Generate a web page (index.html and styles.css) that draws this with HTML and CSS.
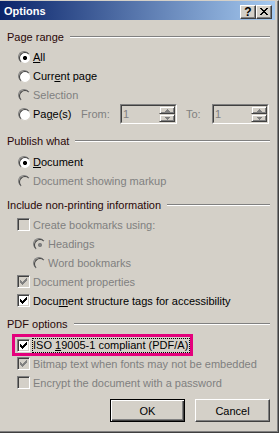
FILE: index.html
```html
<!DOCTYPE html>
<html>
<head>
<meta charset="utf-8">
<title>Options</title>
<link rel="stylesheet" href="styles.css">
</head>
<body>
<div class="window">
  <div class="titlebar">
    <span class="title">Options</span>
    <span class="caps">
      <span class="cap-btn help">?</span>
      <span class="cap-btn"><svg width="14" height="12" viewBox="0 0 14 12"><path d="M3 2h2v1h-2z M9 2h2v1h-2z M4 3h2v1h-2z M8 3h2v1h-2z M5 4h4v1h-4z M6 5h2v1h-2z M5 6h4v1h-4z M4 7h2v1h-2z M8 7h2v1h-2z M3 8h2v1h-2z M9 8h2v1h-2z" fill="#000"/></svg></span>
    </span>
  </div>
  <div class="content">
    <div class="head g1"><span>Page range</span><i class="etch"></i></div>
    <div class="row r-first"><span class="radio on"></span><span><u>A</u>ll</span></div>
    <div class="row"><span class="radio"></span><span>Curr<u>e</u>nt page</span></div>
    <div class="row dis"><span class="radio"></span><span>Selection</span></div>
    <div class="row pages">
      <span class="radio"></span><span class="lbl-pages">Pa<u>g</u>e(s)</span>
      <span class="lbl-from dis-t">From:</span>
      <span class="spin"><span class="spin-in"><span class="spin-val">1</span><span class="spin-btns"><span class="sb"><svg width="5" height="3" viewBox="0 0 5 3"><path d="M2 0h1v1h1v1h1v1h-5v-1h1v-1h1z" fill="#808080"/></svg></span><span class="sb"><svg width="5" height="3" viewBox="0 0 5 3"><path d="M0 0h5v1h-1v1h-1v1h-1v-1h-1v-1h-1z" fill="#808080"/></svg></span></span></span></span>
      <span class="lbl-to dis-t">To:</span>
      <span class="spin"><span class="spin-in"><span class="spin-val">1</span><span class="spin-btns"><span class="sb"><svg width="5" height="3" viewBox="0 0 5 3"><path d="M2 0h1v1h1v1h1v1h-5v-1h1v-1h1z" fill="#808080"/></svg></span><span class="sb"><svg width="5" height="3" viewBox="0 0 5 3"><path d="M0 0h5v1h-1v1h-1v1h-1v-1h-1v-1h-1z" fill="#808080"/></svg></span></span></span></span>
    </div>

    <div class="head g2"><span>Publish what</span><i class="etch"></i></div>
    <div class="row r-first2"><span class="radio on"></span><span><u>D</u>ocument</span></div>
    <div class="row dis"><span class="radio"></span><span>Document showing markup</span></div>

    <div class="head g3"><span>Include non-printing information</span><i class="etch"></i></div>
    <div class="row crow r-first dis"><span class="check"></span><span>Create bookmarks using:</span></div>
    <div class="row sub dis"><span class="radio on"></span><span>Headings</span></div>
    <div class="row sub dis"><span class="radio"></span><span>Word bookmarks</span></div>
    <div class="row crow dis"><span class="check on"><svg width="13" height="13" viewBox="0 0 13 13"><path d="M3 5h1v3h-1z M4 6h1v3h-1z M5 7h1v3h-1z M6 6h1v3h-1z M7 5h1v3h-1z M8 4h1v3h-1z M9 3h1v3h-1z"/></svg></span><span>Document properties</span></div>
    <div class="row crow"><span class="check on"><svg width="13" height="13" viewBox="0 0 13 13"><path d="M3 5h1v3h-1z M4 6h1v3h-1z M5 7h1v3h-1z M6 6h1v3h-1z M7 5h1v3h-1z M8 4h1v3h-1z M9 3h1v3h-1z"/></svg></span><span>Docu<u>m</u>ent structure tags for accessibility</span></div>

    <div class="head g4"><span>PDF options</span><i class="etch"></i></div>
    <div class="hl"><span class="check on"><svg width="13" height="13" viewBox="0 0 13 13"><path d="M3 5h1v3h-1z M4 6h1v3h-1z M5 7h1v3h-1z M6 6h1v3h-1z M7 5h1v3h-1z M8 4h1v3h-1z M9 3h1v3h-1z"/></svg></span><span class="focus">ISO <u>1</u>9005-1 compliant (PDF/A)</span></div>
    <div class="row crow dis after-hl"><span class="check on"><svg width="13" height="13" viewBox="0 0 13 13"><path d="M3 5h1v3h-1z M4 6h1v3h-1z M5 7h1v3h-1z M6 6h1v3h-1z M7 5h1v3h-1z M8 4h1v3h-1z M9 3h1v3h-1z"/></svg></span><span>Bitmap text when fonts may not be embedded</span></div>
    <div class="row crow dis"><span class="check"></span><span>Encrypt the document with a password</span></div>

    <div class="buttons">
      <span class="btn default">OK</span>
      <span class="btn">Cancel</span>
    </div>
  </div>
</div>
</body>
</html>
```
FILE: styles.css
```css
* { box-sizing: border-box; }
body {
  margin: 0;
  font: 11px "Liberation Sans", Arial, sans-serif;
  color: #000;
}
u { text-decoration: underline; text-underline-offset: 1px; }

.window {
  width: 279px;
  height: 433px;
  background: #d4d0c8;
  border-top: 1px solid #d4d0c8;
  border-right: 1px solid #404040;
  border-bottom: 1px solid #404040;
  box-shadow: inset -1px -1px #808080;
  display: flex;
  flex-direction: column;
}

.titlebar {
  height: 19px;
  margin-right: 3px;
  background: linear-gradient(to right, #0a246a, #a6caf0);
  display: flex;
  align-items: center;
  justify-content: space-between;
  padding: 0 3px 0 4px;
}
.title {
  color: #fff;
  font-weight: bold;
  font-size: 11px;
  margin-top: 1px;
}
.caps { display: flex; margin-top: 2px; }
.cap-btn {
  width: 16px;
  height: 14px;
  background: #d4d0c8;
  border: 1px solid;
  border-color: #fff #404040 #404040 #fff;
  box-shadow: inset -1px -1px #808080;
  display: flex;
  align-items: center;
  justify-content: center;
}
.cap-btn.help {
  font-weight: bold;
  font-size: 12px;
  line-height: 12px;
}

.content {
  flex: 1;
  padding: 7px 8px 0 7px;
  display: flex;
  flex-direction: column;
}

.head {
  height: 19px;
  display: flex;
  align-items: center;
  color: #2a0808;
}
.etch {
  flex: 1;
  height: 2px;
  margin-left: 6px;
  border-top: 1px solid #808080;
  border-bottom: 1px solid #fff;
}
.g2 { margin-top: 7px; }
.g3 { margin-top: 5px; }
.g4 { margin-top: 4px; }

.row {
  height: 19px;
  display: flex;
  align-items: center;
  padding-left: 11px;
  white-space: nowrap;
}
.r-first { margin-top: 1px; }
.r-first2 { margin-top: 2px; }
.row.crow { padding-left: 10px; }
.row.sub { padding-left: 26px; }
.dis { color: #808080; }
.dis-t { color: #808080; }

.radio {
  flex: none;
  width: 12px;
  height: 12px;
  margin-right: 3px;
  border-radius: 50%;
  border: 1px solid;
  border-color: #808080 #fff #fff #808080;
  transform: rotate(0deg);
}
.radio::before {
  content: "";
  display: block;
  width: 10px;
  height: 10px;
  border-radius: 50%;
  border: 1px solid;
  border-color: #404040 #d4d0c8 #d4d0c8 #404040;
  background: #fff;
}
.radio.on::before {
  background: radial-gradient(circle at 50% 50%, #000 0 2px, #fff 2.2px);
}
.dis .radio::before { background: #d4d0c8; }
.dis .radio.on::before {
  background: radial-gradient(circle at 50% 50%, #808080 0 2px, #d4d0c8 2.2px);
}

.check {
  flex: none;
  width: 13px;
  height: 13px;
  margin-right: 3px;
  border: 1px solid;
  border-color: #808080 #fff #fff #808080;
  box-shadow: inset 1px 1px #404040, inset -1px -1px #d4d0c8;
  background: #fff;
  position: relative;
}
.check svg {
  position: absolute;
  left: -1px;
  top: -1px;
  fill: #000;
}
.dis .check { background: #d4d0c8; }
.dis .check svg { fill: #808080; }

.pages { height: 20px; }
.lbl-pages { width: 48px; }
.lbl-from { width: 39px; }
.lbl-to { width: 26px; margin-left: 9px; }
.spin {
  width: 57px;
  height: 20px;
  border: 1px solid;
  border-color: #808080 #fff #fff #808080;
  display: flex;
}
.spin-in {
  flex: 1;
  display: flex;
  border: 1px solid;
  border-color: #404040 #d4d0c8 #d4d0c8 #404040;
  background: #d4d0c8;
}
.spin-val {
  flex: 1;
  color: #808080;
  padding-left: 1px;
  line-height: 16px;
}
.spin-btns {
  width: 16px;
  display: flex;
  flex-direction: column;
}
.sb {
  flex: 1;
  border: 1px solid;
  border-color: #d4d0c8 #404040 #404040 #d4d0c8;
  box-shadow: inset 1px 1px #fff, inset -1px -1px #808080;
  display: flex;
  align-items: center;
  justify-content: center;
}
.sb svg { display: block; }

.hl {
  margin-top: 1px;
  margin-left: 5px;
  width: 181px;
  height: 22px;
  border: 3px solid #e4007c;
  display: flex;
  align-items: center;
  padding-left: 2px;
  white-space: nowrap;
}
.hl .check { margin-right: 2px; }
.focus {
  border: 1px dotted #000;
  line-height: 13px;
  padding-right: 1px;
}
.after-hl { margin-top: -2px; }

.buttons {
  margin-top: 7px;
  display: flex;
  justify-content: flex-end;
  gap: 10px;
}
.btn {
  width: 75px;
  height: 23px;
  background: #d4d0c8;
  border: 1px solid;
  border-color: #fff #404040 #404040 #fff;
  box-shadow: inset -1px -1px #808080;
  display: flex;
  align-items: center;
  justify-content: center;
}
.btn.default {
  border-color: #000;
  box-shadow: inset 1px 1px #fff, inset -1px -1px #404040, inset -2px -2px #808080;
}
```
